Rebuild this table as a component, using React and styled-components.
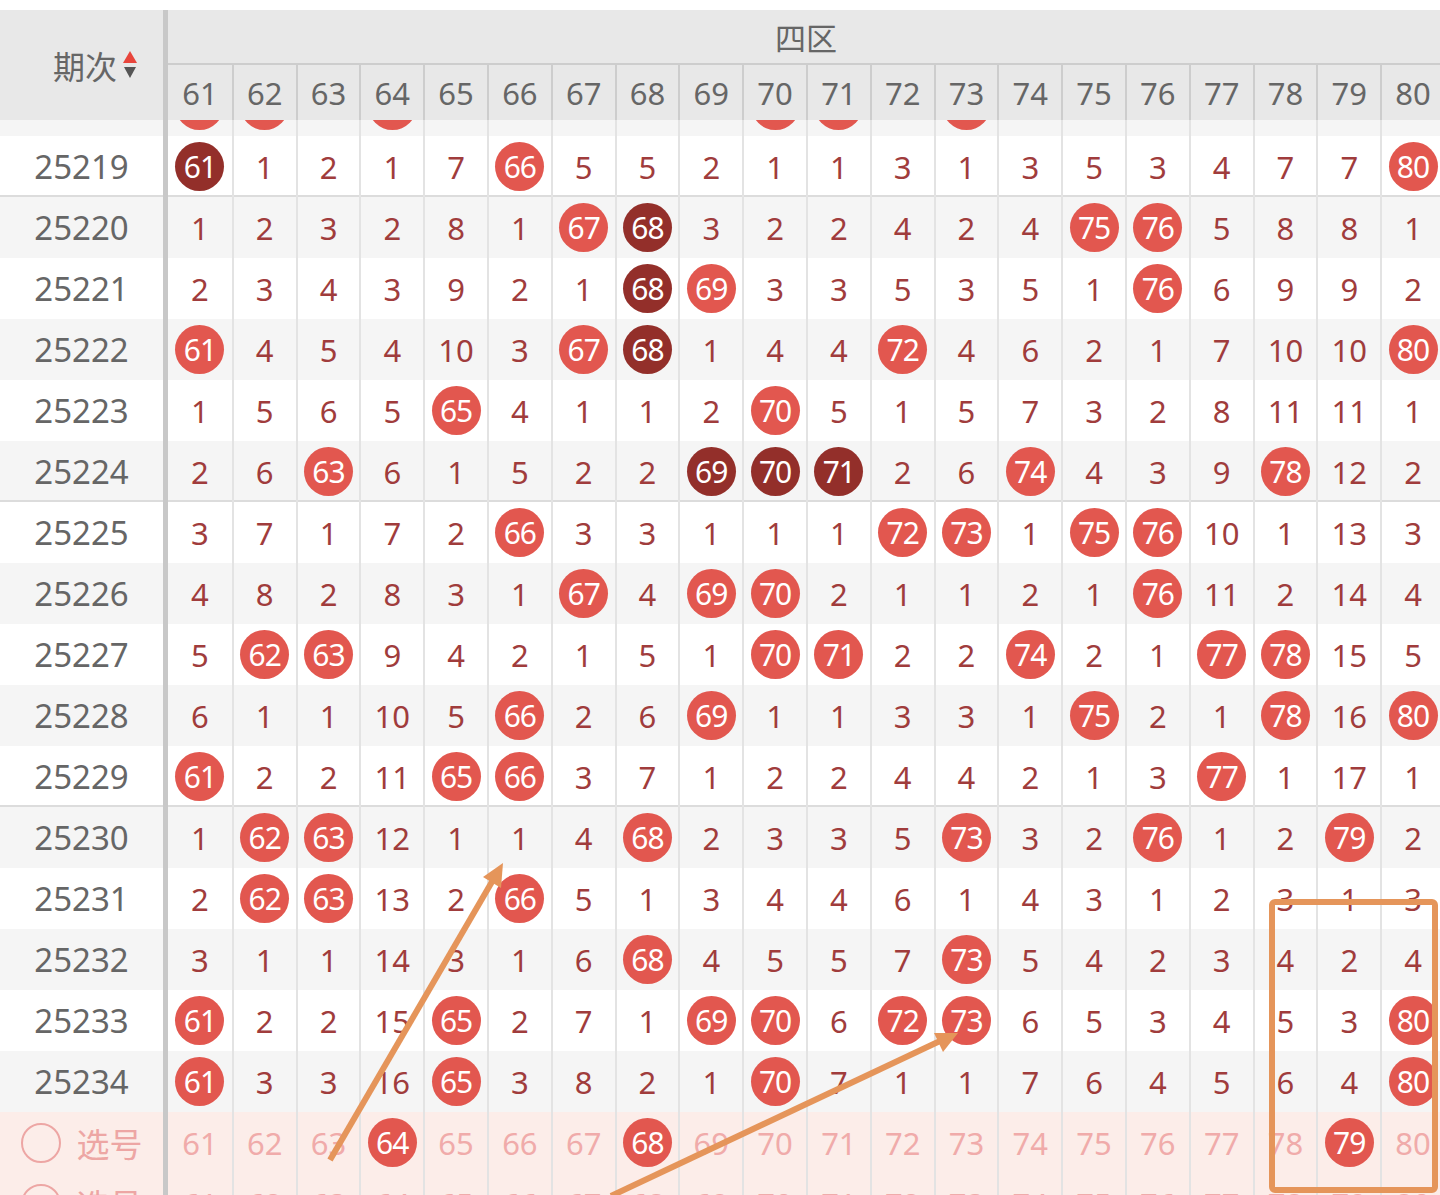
import React from "react";
import styled, { createGlobalStyle } from "styled-components";

const COLS = Array.from({ length: 20 }, (_, i) => 61 + i);

// each row: issue number, 20 values (value === column number means a hit), dark hits
const ROWS = [
  { issue: "25218", nums: [61, 62, 1, 64, 6, 3, 4, 4, 1, 70, 71, 2, 73, 2, 4, 2, 3, 6, 6, 5] },
  { issue: "25219", nums: [61, 1, 2, 1, 7, 66, 5, 5, 2, 1, 1, 3, 1, 3, 5, 3, 4, 7, 7, 80], dark: [61] },
  { issue: "25220", nums: [1, 2, 3, 2, 8, 1, 67, 68, 3, 2, 2, 4, 2, 4, 75, 76, 5, 8, 8, 1], dark: [68] },
  { issue: "25221", nums: [2, 3, 4, 3, 9, 2, 1, 68, 69, 3, 3, 5, 3, 5, 1, 76, 6, 9, 9, 2], dark: [68] },
  { issue: "25222", nums: [61, 4, 5, 4, 10, 3, 67, 68, 1, 4, 4, 72, 4, 6, 2, 1, 7, 10, 10, 80], dark: [68] },
  { issue: "25223", nums: [1, 5, 6, 5, 65, 4, 1, 1, 2, 70, 5, 1, 5, 7, 3, 2, 8, 11, 11, 1] },
  { issue: "25224", nums: [2, 6, 63, 6, 1, 5, 2, 2, 69, 70, 71, 2, 6, 74, 4, 3, 9, 78, 12, 2], dark: [69, 70, 71] },
  { issue: "25225", nums: [3, 7, 1, 7, 2, 66, 3, 3, 1, 1, 1, 72, 73, 1, 75, 76, 10, 1, 13, 3] },
  { issue: "25226", nums: [4, 8, 2, 8, 3, 1, 67, 4, 69, 70, 2, 1, 1, 2, 1, 76, 11, 2, 14, 4] },
  { issue: "25227", nums: [5, 62, 63, 9, 4, 2, 1, 5, 1, 70, 71, 2, 2, 74, 2, 1, 77, 78, 15, 5] },
  { issue: "25228", nums: [6, 1, 1, 10, 5, 66, 2, 6, 69, 1, 1, 3, 3, 1, 75, 2, 1, 78, 16, 80] },
  { issue: "25229", nums: [61, 2, 2, 11, 65, 66, 3, 7, 1, 2, 2, 4, 4, 2, 1, 3, 77, 1, 17, 1] },
  { issue: "25230", nums: [1, 62, 63, 12, 1, 1, 4, 68, 2, 3, 3, 5, 73, 3, 2, 76, 1, 2, 79, 2] },
  { issue: "25231", nums: [2, 62, 63, 13, 2, 66, 5, 1, 3, 4, 4, 6, 1, 4, 3, 1, 2, 3, 1, 3] },
  { issue: "25232", nums: [3, 1, 1, 14, 3, 1, 6, 68, 4, 5, 5, 7, 73, 5, 4, 2, 3, 4, 2, 4] },
  { issue: "25233", nums: [61, 2, 2, 15, 65, 2, 7, 1, 69, 70, 6, 72, 73, 6, 5, 3, 4, 5, 3, 80] },
  { issue: "25234", nums: [61, 3, 3, 16, 65, 3, 8, 2, 1, 70, 7, 1, 1, 7, 6, 4, 5, 6, 4, 80] },
];

const PICKS = [[64, 68, 79], []];

const GlobalStyle = createGlobalStyle`
  body {
    margin: 0;
    background: #fff;
    overflow: hidden;
    font-family: "Noto Sans", "Noto Sans CJK SC", sans-serif;
  }
`;

const Page = styled.div`
  position: relative;
  height: 1195px;
  padding-top: 10px;
  box-sizing: border-box;
  overflow: hidden;
`;

const Table = styled.div`
  width: 1444px;
`;

const Header = styled.div`
  position: relative;
  z-index: 2;
  display: flex;
  height: 110px;
  background: #e8e8e8;
`;

const IssueHead = styled.div`
  width: 168px;
  box-sizing: border-box;
  border-right: 5px solid #c8c8c8;
  display: flex;
  align-items: center;
  justify-content: flex-end;
  gap: 5px;
  padding-right: 25px;
  font-size: 32px;
  color: #666;
`;

const ZoneHead = styled.div`
  flex: 1;
  display: flex;
  flex-direction: column;
`;

const ZoneTitle = styled.div`
  height: 55px;
  box-sizing: border-box;
  border-bottom: 2px solid #cdcdcd;
  display: flex;
  align-items: center;
  justify-content: center;
  font-size: 31px;
  color: #666;
`;

const Grid = styled.div`
  display: grid;
  grid-template-columns: repeat(20, 63.8px);
  flex: 1;
`;

const HeadNum = styled.div`
  display: flex;
  align-items: center;
  justify-content: center;
  border-left: 2px solid #cdcdcd;
  font-size: 31px;
  color: #666;
  &:first-child {
    border-left: none;
  }
`;

const Body = styled.div`
  position: relative;
  z-index: 1;
  margin-top: -45px;
`;

const rowBg = { plain: "#fff", alt: "#f5f5f5", pick: "#fcede9" };

const Row = styled.div`
  display: flex;
  height: 61px;
  background: ${(p) => rowBg[p.$tone]};
  box-shadow: ${(p) => (p.$groupEnd ? "inset 0 -2px 0 #dcdcdc" : "none")};
`;

const IssueCell = styled.div`
  width: 168px;
  flex-shrink: 0;
  box-sizing: border-box;
  border-right: 5px solid #c8c8c8;
  display: flex;
  align-items: center;
  justify-content: center;
  gap: 16px;
  font-size: 33px;
  color: ${(p) => (p.$pick ? "#eda6a4" : "#666")};
`;

const Cell = styled.div`
  display: flex;
  align-items: center;
  justify-content: center;
  border-left: 2px solid #e3e3e3;
  font-size: 31px;
  color: ${(p) => (p.$pick ? "#f0abaa" : "#a03c3c")};
  &:first-child {
    border-left: none;
  }
`;

const Ball = styled.span`
  width: 49px;
  height: 49px;
  border-radius: 50%;
  background: ${(p) => (p.$dark ? "#932f2a" : "#e2574f")};
  color: #fff;
  display: flex;
  align-items: center;
  justify-content: center;
  font-size: 30px;
  letter-spacing: -1px;
`;

const Ring = styled.span`
  width: 40px;
  height: 40px;
  box-sizing: border-box;
  border-radius: 50%;
  border: 2px solid #eda6a4;
`;

const Marks = styled.svg`
  position: absolute;
  left: 0;
  top: 0;
  z-index: 5;
  pointer-events: none;
`;

function SortArrows() {
  return (
    <svg width="16" height="32" viewBox="0 0 16 32">
      <polygon points="8,2 15,14 1,14" fill="#e8453c" />
      <polygon points="2,18 14,18 8,29" fill="#555" />
    </svg>
  );
}

function DataRow({ row, index }) {
  const dark = row.dark || [];
  const last = row.issue.endsWith("4") || row.issue.endsWith("9");
  return (
    <Row $tone={index % 2 === 0 ? "alt" : "plain"} $groupEnd={last && row.issue !== "25234"}>
      <IssueCell>{row.issue}</IssueCell>
      <Grid>
        {row.nums.map((n, i) => (
          <Cell key={i}>
            {n === COLS[i] ? <Ball $dark={dark.includes(n)}>{n}</Ball> : n}
          </Cell>
        ))}
      </Grid>
    </Row>
  );
}

function PickRow({ picked }) {
  return (
    <Row $tone="pick">
      <IssueCell $pick>
        <Ring />
        选号
      </IssueCell>
      <Grid>
        {COLS.map((c) => (
          <Cell key={c} $pick>
            {picked.includes(c) ? <Ball>{c}</Ball> : c}
          </Cell>
        ))}
      </Grid>
    </Row>
  );
}

export default function App() {
  return (
    <Page>
      <GlobalStyle />
      <Table>
        <Header>
          <IssueHead>
            期次
            <SortArrows />
          </IssueHead>
          <ZoneHead>
            <ZoneTitle>四区</ZoneTitle>
            <Grid>
              {COLS.map((c) => (
                <HeadNum key={c}>{c}</HeadNum>
              ))}
            </Grid>
          </ZoneHead>
        </Header>
        <Body>
          {ROWS.map((row, i) => (
            <DataRow key={row.issue} row={row} index={i} />
          ))}
          {PICKS.map((p, i) => (
            <PickRow key={i} picked={p} />
          ))}
        </Body>
      </Table>
      <Marks width="1440" height="1195" viewBox="0 0 1440 1195">
        <g stroke="#e5955a" strokeWidth="6" fill="none" strokeLinecap="butt">
          <line x1="330" y1="1160" x2="493" y2="880" />
          <line x1="611" y1="1196" x2="940" y2="1041" />
          <rect x="1272" y="902" width="163" height="288" rx="3" />
        </g>
        <g fill="#e5955a">
          <polygon points="503,863 501,888 483,877" />
          <polygon points="958,1033 943,1052 934,1033" />
        </g>
      </Marks>
    </Page>
  );
}
